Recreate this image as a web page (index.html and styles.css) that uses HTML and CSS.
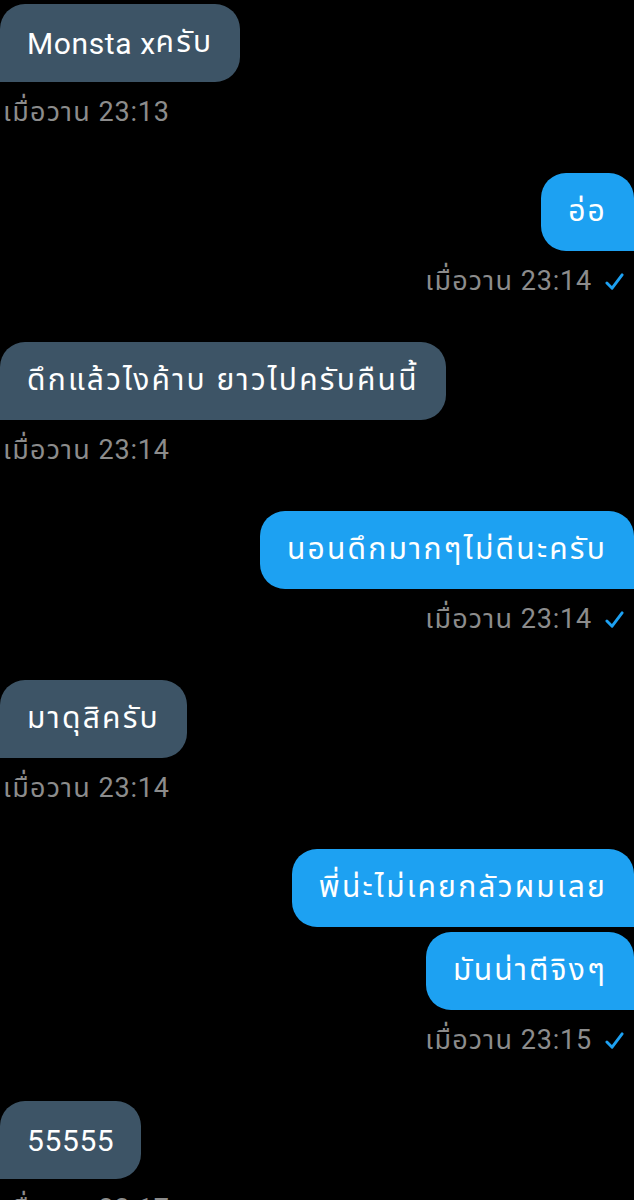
FILE: index.html
```html
<!DOCTYPE html>
<html lang="th">
<head>
<meta charset="utf-8">
<title>Chat</title>
<link rel="stylesheet" href="styles.css">
</head>
<body>
<main class="chat">
  <section class="group in">
    <div class="bubble">Monsta x<span class="th">ครับ</span></div>
    <div class="meta"><span><span class="th">เมื่อวาน</span> 23:13</span></div>
  </section>
  <section class="group out">
    <div class="bubble"><span class="th">อ่อ</span></div>
    <div class="meta"><span><span class="th">เมื่อวาน</span> 23:14</span><svg class="check" viewBox="0 0 20 20"><path d="M2 11.5 L7.5 17 L18 3"/></svg></div>
  </section>
  <section class="group in">
    <div class="bubble"><span class="th">ดึกแล้วไงค้าบ ยาวไปครับคืนนี้</span></div>
    <div class="meta"><span><span class="th">เมื่อวาน</span> 23:14</span></div>
  </section>
  <section class="group out">
    <div class="bubble"><span class="th">นอนดึกมากๆไม่ดีนะครับ</span></div>
    <div class="meta"><span><span class="th">เมื่อวาน</span> 23:14</span><svg class="check" viewBox="0 0 20 20"><path d="M2 11.5 L7.5 17 L18 3"/></svg></div>
  </section>
  <section class="group in">
    <div class="bubble"><span class="th">มาดุสิครับ</span></div>
    <div class="meta"><span><span class="th">เมื่อวาน</span> 23:14</span></div>
  </section>
  <section class="group out">
    <div class="bubble"><span class="th">พี่น่ะไม่เคยกลัวผมเลย</span></div>
    <div class="bubble"><span class="th">มันน่าตีจิงๆ</span></div>
    <div class="meta"><span><span class="th">เมื่อวาน</span> 23:15</span><svg class="check" viewBox="0 0 20 20"><path d="M2 11.5 L7.5 17 L18 3"/></svg></div>
  </section>
  <section class="group in">
    <div class="bubble">55555</div>
    <div class="meta"><span><span class="th">เมื่อวาน</span> 23:17</span></div>
  </section>
</main>
</body>
</html>
```
FILE: styles.css
```css
html, body {
  margin: 0;
  padding: 0;
  background: #000;
}
.chat {
  display: flex;
  flex-direction: column;
  gap: 43px;
  padding-top: 4px;
  font-family: Roboto, "Noto Sans Thai", "Noto Sans Thai UI", "Noto Sans", sans-serif;
}
.group {
  display: flex;
  flex-direction: column;
  gap: 5px;
}
.group.in { align-items: flex-start; }
.group.out { align-items: flex-end; }
.bubble {
  box-sizing: border-box;
  height: 78px;
  display: flex;
  align-items: center;
  padding: 0 27px;
  font-size: 30px;
  letter-spacing: 0.6px;
  color: #fff;
  white-space: pre;
}
.bubble .th {
  letter-spacing: 2.2px;
}
.in .bubble {
  background: #3d5466;
  border-radius: 25px 25px 25px 0;
}
.out .bubble {
  background: #1da1f2;
  border-radius: 25px 25px 0 25px;
}
.meta {
  display: flex;
  align-items: center;
  gap: 13px;
  height: 36px;
  margin-top: 7px;
  font-size: 27px;
  letter-spacing: 0.8px;
  color: #8c8c8c;
  white-space: pre;
}
.meta .th {
  letter-spacing: 1.2px;
}
.in .meta { padding-left: 3px; }
.out .meta { padding-right: 10px; }
.check {
  width: 19px;
  height: 19px;
  fill: none;
  stroke: #1da1f2;
  stroke-width: 3;
  stroke-linecap: round;
  stroke-linejoin: round;
}
```
